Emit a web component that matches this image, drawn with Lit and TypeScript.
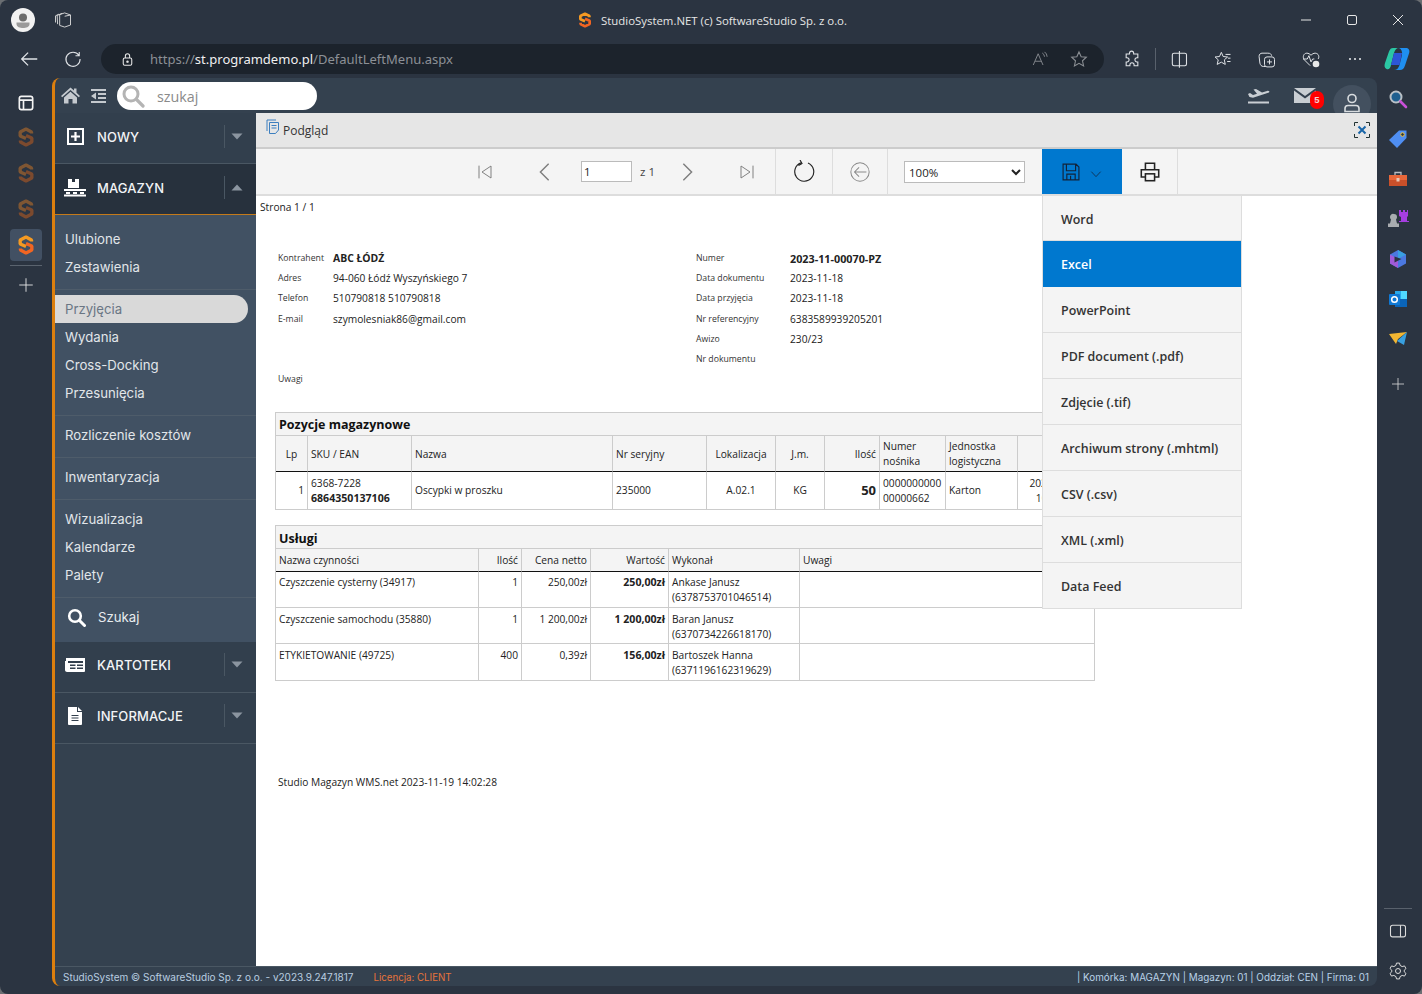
import { LitElement, css, html, svg } from 'lit'
import { customElement } from 'lit/decorators.js'

const icon = (size: number, body: unknown, box = 24) => html`
  <svg width=${size} height=${size} viewBox="0 0 ${box} ${box}" fill="none" stroke="currentColor" stroke-width="1.5">${body}</svg>
`

const sLogo = (size: number, top: string, bottom: string) => html`
  <svg width=${size} height=${size} viewBox="0 0 20 20" fill="none" stroke-width="3.4" stroke-linejoin="bevel">
    <path stroke=${top} d="M15.5 6.5 V5 L10 2 L4.2 5 V9 L10 11.5" />
    <path stroke=${bottom} d="M10 8.5 L15.8 11 V15 L10 18 L4.5 15 V13.5" />
  </svg>
`

const caret = (up: boolean) => html`
  <svg width="12" height="7" viewBox="0 0 12 7"><path fill="#8b95a0" d=${up ? 'M6 0.5 L11.5 6.5 H0.5 Z' : 'M6 6.5 L11.5 0.5 H0.5 Z'} /></svg>
`

const icons = {
  tabs: svg`<path d="M8 5.5 L14 3.5 L21 6 V18 L14 20.5 L8 18.5 Z M14 7.5 L21 6 M5.5 17 L5 6.5 L11 4 M3 15 V7 L7 5" stroke-width="1.1" />`,
  back: svg`<path d="M21 12 H4 M11 5 L4 12 L11 19" stroke-width="1.4" />`,
  refresh: svg`<path d="M19 7.5 A8.5 8.5 0 1 0 20.5 12 M19.5 3.5 V8 H15" stroke-width="1.3" />`,
  lock: svg`<rect x="6" y="10" width="12" height="10" rx="2" /><path d="M9 10 V7 a3 3 0 0 1 6 0 V10" /><circle cx="12" cy="15" r="1" fill="currentColor" />`,
  aloud: svg`<path d="M3 20 L9.5 5 L16 20 M5.5 15 H13.5 M15 4 a6 6 0 0 1 3 5 M18 2.5 a8 8 0 0 1 3.5 6.5" stroke-width="1.2" />`,
  star: svg`<path d="M12 3.5 L14.6 9.2 L20.8 9.9 L16.2 14.1 L17.5 20.3 L12 17.2 L6.5 20.3 L7.8 14.1 L3.2 9.9 L9.4 9.2 Z" stroke-width="1.3" />`,
  puzzle: svg`<path d="M9 5 a2.5 2.5 0 0 1 5 0 V6 H19 V10.5 H18 a2.5 2.5 0 0 0 0 5 H19 V20 H14.5 V19 a2.5 2.5 0 0 0 -5 0 V20 H5 V15.5 H6 a2.5 2.5 0 0 0 0 -5 H5 V6 H9 Z" stroke-width="1.3" />`,
  split: svg`<rect x="4" y="5" width="17" height="15" rx="2" stroke-width="1.3" /><path d="M12.5 2.5 V22.5" stroke-width="1.3" />`,
  favs: svg`<path d="M10 4 L12.2 9 L17.5 9.6 L13.6 13 L14.7 18.5 L10 15.8 L5 18.5 L6.3 13 L2.5 9.6 L7.8 9 Z M15 6.5 H21 M18 11 H21 M17 15 H21" stroke-width="1.2" />`,
  collections: svg`<path d="M10 21 H8 C5 21 4 19 3.5 17 L2.5 9 C2.5 6.5 4 5 6 5 H13 C16 5 17 6 17.5 8" stroke-width="1.2" /><rect x="9" y="9.5" width="12" height="12" rx="3" stroke-width="1.2" /><path d="M15 12.5 V18.5 M12 15.5 H18" stroke-width="1.2" />`,
  health: svg`<path d="M11 20 L4 13 C1.5 10 3 5 7 5 C9 5 10.5 6 12 7.5 C13.5 6 15 5 17 5 C21 5 22.5 9.5 20.5 12 M2.5 12 H7.5 L9.5 8 L12 15.5 L14 12 H16" stroke-width="1.2" /><circle cx="18" cy="18" r="4" fill="#e8e8e8" stroke="none" />`,
  more: svg`<circle cx="6" cy="12" r="1.3" fill="currentColor" stroke="none" /><circle cx="12" cy="12" r="1.3" fill="currentColor" stroke="none" /><circle cx="18" cy="12" r="1.3" fill="currentColor" stroke="none" />`,
  panel: svg`<rect x="4" y="4" width="16" height="16" rx="2.5" stroke-width="2" /><path d="M4 8.5 H20 M9 8.5 V20" stroke-width="2" />`,
  plus: svg`<path d="M12 3 V21 M3 12 H21" stroke-width="1.2" />`,
  sidePanel: svg`<rect x="3" y="5" width="18" height="14" rx="2.5" stroke-width="1.3" /><path d="M15 5 V19" stroke-width="1.3" />`,
  gear: svg`<circle cx="12" cy="12" r="3" stroke-width="1.2" /><path d="M10.2 2.5 H13.8 L14.5 5.3 L17 6.7 L19.8 5.9 L21.6 9 L19.5 11 V13 L21.6 15 L19.8 18.1 L17 17.3 L14.5 18.7 L13.8 21.5 H10.2 L9.5 18.7 L7 17.3 L4.2 18.1 L2.4 15 L4.5 13 V11 L2.4 9 L4.2 5.9 L7 6.7 L9.5 5.3 Z" stroke-width="1.2" stroke-linejoin="round" />`,
  first: svg`<path d="M4 3.5 V20.5 M20 4 L8 12 L20 20 Z" stroke-width="1.3" />`,
  last: svg`<path d="M20 3.5 V20.5 M4 4 L16 12 L4 20 Z" stroke-width="1.3" />`,
  prev: svg`<path d="M16 3 L7 12 L16 21" stroke-width="1.6" />`,
  next: svg`<path d="M8 3 L17 12 L8 21" stroke-width="1.6" />`,
  reload: svg`<path d="M9 2.800 A9.5 9.5 0 1 0 16 3 M8 0 L10 3.500 L6.500 5.500" stroke-width="1.15" />`,
  backCircle: svg`<circle cx="12" cy="12" r="10" stroke-width="1.1" /><path d="M19 12 H6 M11 7 L6 12 L11 17" stroke-width="1.1" />`,
  floppy: svg`<path d="M2.5 2.5 H18 L21.5 6 V21.5 H2.5 Z M6.5 2.5 V10.5 H17.5 V2.5 M7 21.5 V14.5 H17 V21.5 M11.5 16.5 V21.5" stroke-width="1.4" />`,
  chevron: svg`<path d="M4 8 L12 16.500 L20 8" stroke-width="1.3" />`,
  printer: svg`<path d="M7 9 V2.5 H17 V9 M6.5 17.5 H2.5 V9.5 H21.5 V17.5 H17.5" stroke-width="1.7" /><rect x="7" y="14" width="10" height="7.5" stroke-width="1.7" />`,
}

const rightRail = [
  html`<svg width="20" height="20" viewBox="0 0 20 20" fill="none"><circle cx="8" cy="8" r="5.5" fill="#1f5f8f" stroke="#b9c0c6" stroke-width="2" /><path d="M12.5 12.5 L18 18" stroke="#c850d8" stroke-width="2.6" stroke-linecap="round" /></svg>`,
  html`<svg width="20" height="20" viewBox="0 0 20 20"><path fill="#4f8ef2" d="M11 1.5 H18.5 V9 L9 19 L1 11 Z" /><circle cx="14.5" cy="5.5" r="1.8" fill="#2b3442" stroke="#f2c230" stroke-width="1" /></svg>`,
  html`<svg width="20" height="20" viewBox="0 0 20 20" fill="none"><path d="M7 6 V3.5 H13 V6" stroke="#b9bdc2" stroke-width="1.3" /><rect x="1" y="6" width="18" height="5" fill="#e8673a" /><rect x="1" y="11" width="18" height="6" fill="#c9502a" /><rect x="8.5" y="9" width="3" height="3.5" fill="#e6c7b5" /></svg>`,
  html`<svg width="22" height="20" viewBox="0 0 22 20"><path fill="#a9acb0" d="M7 5 a3 3 0 0 1 3 3 c0 1 -.5 2 -1 2.5 l1 4 h2 v3.5 H1 V14.500 h2 l1 -4 C3.500 10 3 9 3 8 a3 3 0 0 1 4 -3 Z" /><path fill="#a53ee0" d="M12 1 h2 v2 h2 V1 h2 v2 h2 V1 h1 v6 l-1 1 v4 h2 v1 H12 v-1 h2 V8 l-2 -1 Z" /></svg>`,
  html`<svg width="20" height="20" viewBox="0 0 20 20" fill="none"><path d="M10 1 L18 5.500 V14.500 L10 19 L2 14.500 V5.500 Z" fill="#4b78e0" /><path d="M2 5.500 L10 10 V19 L2 14.500 Z" fill="#a15ad8" /><path d="M10 1 L18 5.500 L10 10 Z" fill="#38a0e0" /><path d="M6.500 7.500 L13.500 10 L6.500 13.500 Z" fill="#2b3442" /></svg>`,
  html`<svg width="20" height="20" viewBox="0 0 20 20"><rect x="7" y="2" width="12" height="16" fill="#28a8ea" /><rect x="13" y="2" width="6" height="8" fill="#50d9ff" /><rect x="7" y="10" width="12" height="8" fill="#0a64b8" /><rect x="1" y="5" width="11" height="11" rx="1" fill="#0f78d4" /><circle cx="6.500" cy="10.500" r="2.800" fill="none" stroke="#fff" stroke-width="1.500" /></svg>`,
  html`<svg width="20" height="20" viewBox="0 0 20 20"><path fill="#f2b632" d="M1 5 L19 3 L10 10 L8 15 Z" /><path fill="#38a0e0" d="M19 3 L16 16 L9 12 Z" /></svg>`,
]

const menu: { text: string; active?: boolean }[][] = [
  [{ text: 'Ulubione' }, { text: 'Zestawienia' }],
  [{ text: 'Przyjęcia', active: true }, { text: 'Wydania' }, { text: 'Cross-Docking' }, { text: 'Przesunięcia' }],
  [{ text: 'Rozliczenie kosztów' }],
  [{ text: 'Inwentaryzacja' }],
  [{ text: 'Wizualizacja' }, { text: 'Kalendarze' }, { text: 'Palety' }],
]

const exportItems = ['Word', 'Excel', 'PowerPoint', 'PDF document (.pdf)', 'Zdjęcie (.tif)', 'Archiwum strony (.mhtml)', 'CSV (.csv)', 'XML (.xml)', 'Data Feed']

const infoLeft = [
  ['Kontrahent', 'ABC ŁÓDŹ'],
  ['Adres', '94-060 Łódź Wyszyńskiego 7'],
  ['Telefon', '510790818 510790818'],
  ['E-mail', 'szymolesniak86@gmail.com'],
  ['', ''],
  ['', ''],
  ['Uwagi', ''],
]

const infoRight = [
  ['Numer', '2023-11-00070-PZ'],
  ['Data dokumentu', '2023-11-18'],
  ['Data przyjęcia', '2023-11-18'],
  ['Nr referencyjny', '6383589939205201'],
  ['Awizo', '230/23'],
  ['Nr dokumentu', ''],
]

const services = [
  ['Czyszczenie cysterny (34917)', '1', '250,00zł', '250,00zł', 'Ankase Janusz', '(6378753701046514)'],
  ['Czyszczenie samochodu (35880)', '1', '1 200,00zł', '1 200,00zł', 'Baran Janusz', '(6370734226618170)'],
  ['ETYKIETOWANIE (49725)', '400', '0,39zł', '156,00zł', 'Bartoszek Hanna', '(6371196162319629)'],
]

@customElement('app-root')
export class AppRoot extends LitElement {
  static styles = css`
    :host {
      display: block;
      width: 1422px;
      height: 994px;
      overflow: hidden;
      background: #6a6e72;
      font-family: 'Noto Sans', sans-serif;
    }

    .window {
      width: 1422px;
      height: 994px;
      box-sizing: border-box;
      border-radius: 8px;
      background: #2b3441;
      display: flex;
      flex-direction: column;
      color: #e8e8e8;
      overflow: hidden;
    }

    .center { display: flex; align-items: center; justify-content: center; flex: none; }

    /* browser chrome */
    .titlebar { height: 40px; flex: none; display: flex; align-items: center; position: relative; }
    .avatar { width: 24px; height: 24px; margin-left: 11px; border-radius: 50%; background: #f2f2f2; overflow: hidden; }
    .tabs-btn { width: 24px; height: 24px; margin-left: 16px; color: #dcdcdc; }
    .title { flex: 1; display: flex; align-items: center; justify-content: center; gap: 8px; font-size: 11.4px; color: #e6e6e6; margin-right: -66px; }
    .title span { font-family: 'Open Sans', sans-serif; }
    .winbtns { display: flex; margin-right: 1px; }
    .winbtn { width: 46px; height: 40px; color: #e6e6e6; }

    .addrbar { height: 38px; flex: none; display: flex; align-items: center; padding-left: 7px; }
    .ib { width: 44px; height: 38px; color: #dfe2e6; }
    .url-pill { width: 1003px; height: 30px; margin: 0 6px; box-sizing: border-box; border-radius: 15px; background: #1c232c; display: flex; align-items: center; padding: 0 6px 0 17px; }
    .lock { width: 18px; color: #e8e8e8; margin-right: 14px; }
    .url { flex: 1; font-size: 13.03px; color: #8c9096; white-space: nowrap; }
    .url span { color: #f0f0f0; }
    .url-end { width: 39px; color: #8b8f94; }
    .vsep { width: 1px; height: 22px; background: #59616c; margin: 0 1px; flex: none; }
    .copilot { width: 40px; }

    .shell { flex: 1; display: flex; min-height: 0; }

    .lrail { width: 52px; flex: none; display: flex; flex-direction: column; align-items: center; padding-top: 8px; box-sizing: border-box; }
    .lrail .it { width: 32px; height: 36px; }
    .lrail .it.first { height: 33px; color: #f4f4f4; }
    .lrail .it.on { height: 32px; margin: 2px 0; border-radius: 4px; background: #425063; }
    .lrail .line { width: 32px; height: 1px; background: #5a636e; margin-top: 2px; }
    .lrail .it.add { color: #e8e8e8; margin-top: 1px; }

    .rrail { width: 45px; flex: none; display: flex; flex-direction: column; align-items: center; padding: 1px 3px 3px 0; box-sizing: border-box; }
    .rrail .it { width: 40px; height: 40px; flex: none; color: #dcdcdc; }
    .rrail .it.add { margin-top: 5px; }
    .rrail .line { width: 28px; height: 1px; background: #59616c; margin-top: auto; margin-bottom: 2px; }

    /* application */
    .app { flex: 1; min-width: 0; display: flex; flex-direction: column; margin-bottom: 8px; border-radius: 8px; border-left: 3px solid #dc7f0e; background: #34414f; overflow: hidden; font-family: 'Inter', sans-serif; }
    .topbar { height: 35px; flex: none; display: flex; align-items: center; position: relative; }
    .home { width: 20px; margin-left: 5px; color: #c4c9ce; }
    .outdent { width: 20px; margin-left: 8px; color: #c4c9ce; }
    .search { width: 200px; height: 28px; margin-left: 9px; border-radius: 14px; background: #fff; display: flex; align-items: center; box-sizing: border-box; padding-left: 4px; }
    .search .glass { color: #b4b4b4; width: 24px; }
    .search span { margin: 2px 0 0 12px; font-size: 14.3px; color: #8a8a8a; font-family: 'Open Sans', sans-serif; }
    .top-right { margin-left: auto; display: flex; align-items: center; }
    .plane { width: 28px; color: #c9ced3; margin-right: 20px; }
    .mail { position: relative; width: 24px; height: 20px; margin-right: 16px; color: #c9ced3; }
    .badge { position: absolute; right: -7px; top: 5px; width: 14px; height: 18px; border-radius: 7px; background: #f00; color: #f4d0d0; font-size: 9.500px; font-weight: 700; display: flex; align-items: center; justify-content: center; font-family: 'Liberation Sans', sans-serif; }
    .userbtn { width: 38px; height: 38px; border-radius: 50%; background: #43505f; margin: 8px 6px -8px 0; color: #d8dcdf; display: flex; align-items: flex-start; justify-content: center; padding-top: 8px; box-sizing: border-box; }

    .mid { flex: 1; display: flex; min-height: 0; position: relative; }
    .side { width: 201px; flex: none; display: flex; flex-direction: column; background: #34414f; }
    .hdr { height: 51px; flex: none; box-sizing: border-box; border-bottom: 1px solid #4a5763; border-top: 1px solid transparent; padding-bottom: 4px; display: flex; align-items: center; background: #323f4d; }
    .hdr.open { background: #27313d; border-bottom-color: #c47a1a; }
    .hdr.low { padding-bottom: 6px; }
    .hdr .ic { width: 24px; margin-left: 8px; color: #fff; }
    .hdr .lb { margin-left: 10px; font-size: 13px; font-weight: 500; color: #f2f4f6; flex: 1; letter-spacing: .1px; }
    .hdr .sp { width: 1px; height: 23px; background: #4a5763; }
    .hdr .cr { width: 24px; margin-right: 7px; }

    .sub { background: #415163; }
    .group { padding: 5px 0 8px; border-bottom: 1px solid #4e5c6a; }
    .group.top { padding: 10px 0 8px; }
    .item { height: 28px; display: flex; align-items: center; padding-left: 10px; font-size: 13.2px; color: #e1e6ea; box-sizing: border-box; }
    .item.on { background: #d9d9d9; color: #6a7684; margin-right: 8px; border-radius: 0 14px 14px 0; }
    .seek { height: 44px; flex: none; display: flex; align-items: center; padding-bottom: 6px; box-sizing: border-box; background: #415163; color: #fff; }
    .seek .ic { width: 24px; margin-left: 9px; }
    .seek .lb { font-size: 13.2px; margin-left: 10px; color: #e8ecef; }

    .main { flex: 1; min-width: 0; background: #fff; display: flex; flex-direction: column; position: relative; font-family: 'Open Sans', sans-serif; color: #222; }
    .panelhead { height: 36px; flex: none; box-sizing: border-box; background: #e6e6e6; border-bottom: 2px solid #ccc; display: flex; align-items: center; padding: 1px 0 0 9px; font-size: 12px; color: #333; }
    .panelhead .doc { width: 16px; margin: -7px 2px 0 0; color: #3d7fbf; }
    .panelhead .closer { margin: -1px 6px 0 auto; width: 18px; color: #1a66a8; }

    .toolbar { height: 47px; flex: none; box-sizing: border-box; background: #f4f4f4; border-bottom: 2px solid #ddd; display: flex; align-items: stretch; }
    .cell { border-right: 1px solid #ddd; display: flex; align-items: center; box-sizing: border-box; flex: none; }
    .nav { width: 520px; padding-left: 199px; color: #7e7e7e; }
    .navbtn { width: 60px; height: 100%; }
    .nav .pg { width: 51px; height: 21px; margin-left: 6px; box-sizing: border-box; border: 1px solid #bbb; background: #fff; padding: 0 2px; font: 11.500px 'Open Sans', sans-serif; color: #222; }
    .nav .of { margin: 0 2px 0 8px; width: 16px; font-size: 11.500px; color: #444; white-space: nowrap; }
    .reload { width: 57px; color: #222; justify-content: center; }
    .backb { width: 55px; color: #8a8a8a; justify-content: center; }
    .zoomc { width: 154px; justify-content: flex-start; padding: 1px 0 0 16px; border-right: 0; }
    .zoomc select { width: 121px; height: 22px; border: 1px solid #bbb; background: #fff; font: 11.500px 'Open Sans', sans-serif; color: #222; border-radius: 0; }
    .savec { width: 80px; background: #0078cf; color: #12233a; justify-content: center; gap: 8px; border-right: 0; }
    .savec svg:last-child { margin-top: 4px; }
    .printc { width: 56px; color: #222; justify-content: center; }

    .report { flex: 1; min-height: 0; overflow: hidden; padding: 4px 0 0 4px; font-size: 10.200px; line-height: 15px; }
    .page-no { font-size: 10.200px; height: 14px; line-height: 14px; }
    .info { display: flex; margin: 34px 0 0 18px; }
    .col { display: grid; grid-auto-rows: 20.300px; align-items: center; }
    .col.lc { width: 418px; grid-template-columns: 55px 1fr; }
    .col.rc { grid-template-columns: 94px 1fr; }
    .key { font-size: 8.700px; color: #333; }
    .val { font-size: 10.200px; color: #222; }
    .val.strong { font-weight: 700; font-size: 10.400px; }
    .col.rc .val.strong { font-size: 10.800px; }

    .tbl { width: 820px; margin: 22px 0 0 15px; box-sizing: border-box; border: 1px solid #ccc; }
    .tbl.second { margin-top: 15px; }
    .tbl-title { height: 23px; box-sizing: border-box; background: #f4f4f4; border-bottom: 1px solid #ccc; font-weight: 700; font-size: 12.500px; line-height: 24px; padding-left: 3px; color: #111; }
    .tbl.second .tbl-title { line-height: 25px; }
    .row { display: grid; }
    .tbl.a .row { grid-template-columns: 32px 104px 201px 94px 69px 49px 55px 66px 72px 1fr; }
    .tbl.b .row { grid-template-columns: 203px 43px 69px 78px 131px 1fr; }
    .row > div { border-right: 1px solid #ccc; border-bottom: 1px solid #ccc; padding: 0 3px; box-sizing: border-box; display: flex; flex-direction: column; justify-content: center; min-width: 0; white-space: nowrap; }
    .row > div:last-child { border-right: 0; }
    .row:last-child > div { border-bottom: 0; }
    .row.head > div { background: #f4f4f4; border-bottom: 1px solid #111; }
    .tbl.a .row.head { height: 36px; }
    .tbl.a .row.head > div { padding-top: 1px; }
    .tbl.a .row.body { height: 37px; }
    .tbl.b .row.head { height: 23px; }
    .tbl.b .row.body { height: 36px; }
    .tbl.b .row.body > div { justify-content: flex-start; padding-top: 3px; }
    .tbl.b .row.body + .row.body > div { padding-top: 4px; }
    .ar { text-align: right; }
    .ac { text-align: center; }
    b { font-weight: 700; font-size: 10.600px; }
    .qty { font-size: 13px; font-weight: 700; }
    .foot { margin: 94px 0 0 18px; font-size: 10.200px; }

    .export { position: absolute; left: 786px; top: 83px; width: 200px; background: #f4f4f4; border: 1px solid #ddd; border-top: 0; box-sizing: border-box; font-family: 'Open Sans', sans-serif; }
    .export div { height: 46px; box-sizing: border-box; border-bottom: 1px solid #ddd; display: flex; align-items: center; padding: 1px 0 0 18px; font-size: 12.450px; font-weight: 600; color: #333; }
    .export div:first-child { height: 45px; padding-top: 2px; }
    .export div.on { background: #0078cf; color: #fff; border-bottom-color: #0078cf; }
    .export div:last-child { border-bottom: 0; height: 45px; padding-top: 1px; }

    .status { height: 20px; flex: none; box-sizing: border-box; border-top: 1px solid #4a5763; display: flex; align-items: center; padding: 1px 8px 0; font-size: 10px; color: #b9cde0; white-space: nowrap; }
    .status .lic { margin-left: 20px; color: #e8743b; font-size: 9.700px; }
    .status .right { margin-left: auto; color: #b9d2e8; font-size: 9.900px; }
  `

  render() {
    return html`
      <div class="window">
        <div class="titlebar">
          <div class="avatar center">
            <svg width="24" height="24" viewBox="0 0 24 24"><circle cx="12" cy="9.500" r="4" fill="#6d6d6d" /><path fill="#9a9a9a" d="M5.500 14.500 H18.500 V16 C18.500 19 15 20 12 20 C9 20 5.500 19 5.500 16 Z" /></svg>
          </div>
          <div class="tabs-btn center">${icon(20, icons.tabs)}</div>
          <div class="title">${sLogo(16, '#f59a23', '#f26522')}<span>StudioSystem.NET (c) SoftwareStudio Sp. z o.o.</span></div>
          <div class="winbtns">
            <div class="winbtn center"><svg width="12" height="12" viewBox="0 0 12 12"><path d="M1 6 H11" stroke="currentColor" /></svg></div>
            <div class="winbtn center"><svg width="12" height="12" viewBox="0 0 12 12" fill="none"><rect x="1.500" y="1.500" width="9" height="9" rx="1.500" stroke="currentColor" /></svg></div>
            <div class="winbtn center"><svg width="12" height="12" viewBox="0 0 12 12"><path d="M1 1 L11 11 M11 1 L1 11" stroke="currentColor" /></svg></div>
          </div>
        </div>

        <div class="addrbar">
          <div class="ib center">${icon(22, icons.back)}</div>
          <div class="ib center">${icon(20, icons.refresh)}</div>
          <div class="url-pill">
            <div class="lock center">${icon(17, icons.lock)}</div>
            <div class="url">https://<span>st.programdemo.pl</span>/DefaultLeftMenu.aspx</div>
            <div class="url-end center">${icon(18, icons.aloud)}</div>
            <div class="url-end center">${icon(20, icons.star)}</div>
          </div>
          <div class="ib center">${icon(20, icons.puzzle)}</div>
          <div class="vsep"></div>
          <div class="ib center">${icon(20, icons.split)}</div>
          <div class="ib center">${icon(20, icons.favs)}</div>
          <div class="ib center">${icon(20, icons.collections)}</div>
          <div class="ib center">${icon(20, icons.health)}</div>
          <div class="ib center">${icon(20, icons.more)}</div>
          <div class="copilot center">
            <svg width="26" height="24" viewBox="0 0 26 24"><path fill="#2bc7a4" d="M9 1 H15 C12 1 11 3 10 6 L7 18 C6.500 21 5 23 2.500 22 C0.500 21 0 19 1 16 L5 4.500 C6 2 7 1 9 1 Z" /><path fill="#1f8ff0" d="M15 1 H22 C25 1 26 3.500 25 6.500 L21 18.500 C20 21.500 18.500 23 16 23 H10 C13 23 14.500 21 15.500 18 L18 8 C18.500 5 17.500 2 15 1 Z" /><path fill="#2c56d8" d="M10 6 H18 L15.500 18 H7 Z" /></svg>
          </div>
        </div>

        <div class="shell">
          <div class="lrail">
            <div class="it first center">${icon(20, icons.panel)}</div>
            ${[0, 1, 2].map(() => html`<div class="it center">${sLogo(20, '#7f5633', '#7c4a2e')}</div>`)}
            <div class="it on center">${sLogo(20, '#f59a23', '#f26522')}</div>
            <div class="line"></div>
            <div class="it add center">${icon(18, icons.plus)}</div>
          </div>

          <div class="app">
            <div class="topbar">
              <div class="home center">
                <svg width="19" height="17" viewBox="0 0 19 17"><path fill="currentColor" d="M9.500 0.500 L13 3.500 V1.500 H15.500 V5.800 L19 9 L17.800 10.200 L9.500 3 L1.200 10.200 L0 9 Z M3 10.500 L9.500 4.800 L16 10.500 V16.500 H11.500 V12 H7.500 V16.500 H3 Z" /></svg>
              </div>
              <div class="outdent center">
                <svg width="15" height="14" viewBox="0 0 15 14"><path fill="currentColor" d="M0 0 H15 V2 H0 Z M7 4 H15 V6 H7 Z M7 8 H15 V10 H7 Z M0 12 H15 V14 H0 Z M5 3.500 V10.500 L0 7 Z" /></svg>
              </div>
              <div class="search">
                <div class="glass center"><svg width="24" height="24" viewBox="0 0 24 24" fill="none"><circle cx="10" cy="10" r="7" stroke="currentColor" stroke-width="3" /><path d="M15.500 15.500 L22 22" stroke="currentColor" stroke-width="3.200" stroke-linecap="round" /></svg></div>
                <span>szukaj</span>
              </div>
              <div class="top-right">
                <div class="plane center">
                  <svg width="22" height="16" viewBox="0 0 22 16"><path fill="currentColor" d="M0 6 L2 5 L5 7 L9 5.800 L5.500 1.500 L8 1 L14 4.500 L19 3 C21 2.500 22 3.500 21 4.500 L5 9.800 L1.500 9 Z M0 13.500 H21 V15.500 H0 Z" /></svg>
                </div>
                <div class="mail center">
                  <svg width="22" height="15" viewBox="0 0 22 15"><path fill="currentColor" d="M0 0 H22 L11 8 Z M0 2.500 L11 10.500 L22 2.500 V15 H0 Z" /></svg>
                  <div class="badge">5</div>
                </div>
                <div class="userbtn">
                  <svg width="18" height="20" viewBox="0 0 18 20" fill="none" stroke="currentColor" stroke-width="1.600"><circle cx="9" cy="5.500" r="4" /><path d="M2 18.500 V15.500 C2 13.500 3.500 12.500 5 12.500 H13 C14.500 12.500 16 13.500 16 15.500 V18.500 Z" /></svg>
                </div>
              </div>
            </div>

            <div class="mid">
              <div class="side">
                <div class="hdr">
                  <div class="ic center"><svg width="17" height="17" viewBox="0 0 17 17" fill="none"><rect x="1" y="1" width="15" height="15" stroke="currentColor" stroke-width="2" /><path d="M8.500 4 V13 M4 8.500 H13" stroke="currentColor" stroke-width="2.200" /></svg></div>
                  <div class="lb">NOWY</div><div class="sp"></div><div class="cr center">${caret(false)}</div>
                </div>
                <div class="hdr open">
                  <div class="ic center"><svg width="22" height="18" viewBox="0 0 22 18"><path fill="currentColor" d="M4 0 H8 V3 H11 V0 H15 V9 H4 Z M0 10 H22 V12 H0 Z M2 13 H6 V15 H2 Z M9 13 H13 V15 H9 Z M16 13 H20 V15 H16 Z M0 15.500 H22 V17.500 H0 Z" /></svg></div>
                  <div class="lb">MAGAZYN</div><div class="sp"></div><div class="cr center">${caret(true)}</div>
                </div>
                <div class="sub">
                  ${menu.map((group, i) => html`
                    <div class="group ${i === 0 ? 'top' : ''}">
                      ${group.map(m => html`<div class="item ${m.active ? 'on' : ''}">${m.text}</div>`)}
                    </div>
                  `)}
                </div>
                <div class="seek">
                  <div class="ic center"><svg width="19" height="19" viewBox="0 0 19 19" fill="none"><circle cx="8" cy="8" r="5.800" stroke="currentColor" stroke-width="2.600" /><path d="M12.500 12.500 L17.500 17.500" stroke="currentColor" stroke-width="3" stroke-linecap="round" /></svg></div>
                  <div class="lb">Szukaj</div>
                </div>
                <div class="hdr low">
                  <div class="ic center"><svg width="20" height="14" viewBox="0 0 20 14"><path fill="currentColor" d="M1 0 H20 V13 C20 13.500 19.500 14 19 14 H2 C1 14 0 13 0 12 V3 H1 Z M3 3 V5 H18 V3 Z M5 6.500 V8 H10.500 V6.500 Z M12 6.500 V8 H18 V6.500 Z M5 9.500 V11 H10.500 V9.500 Z M12 9.500 V11 H18 V9.500 Z" fill-rule="evenodd" /></svg></div>
                  <div class="lb">KARTOTEKI</div><div class="sp"></div><div class="cr center">${caret(false)}</div>
                </div>
                <div class="hdr low">
                  <div class="ic center"><svg width="14" height="18" viewBox="0 0 14 18"><path fill="currentColor" fill-rule="evenodd" d="M0 0 H9 V5 H14 V17 C14 17.500 13.500 18 13 18 H1 C.500 18 0 17.500 0 17 Z M10 0 L14 4 H10 Z M3.500 8 V9 H10.500 V8 Z M3.500 10.500 V11.500 H10.500 V10.500 Z M3.500 13 V14 H10.500 V13 Z" /></svg></div>
                  <div class="lb">INFORMACJE</div><div class="sp"></div><div class="cr center">${caret(false)}</div>
                </div>
              </div>

              <div class="main">
                <div class="panelhead">
                  <div class="doc center"><svg width="14" height="16" viewBox="0 0 14 16" fill="none" stroke="currentColor"><path d="M1 12 V1 H10 M3.500 14.500 V3.500 H12.500 V11 L9.500 14.500 Z" /><path d="M5.500 6.500 H10.500 M5.500 9 H10.500" /></svg></div>
                  Podgląd
                  <div class="closer center"><svg width="16" height="16" viewBox="0 0 16 16" fill="none" stroke="currentColor"><path d="M0.500 4 V0.500 H4 M12 0.500 H15.500 V4 M15.500 12 V15.500 H12 M4 15.500 H0.500 V12" stroke="#233" /><path d="M4.500 4.500 L11.500 11.500 M11.500 4.500 L4.500 11.500" stroke-width="2" /></svg></div>
                </div>

                <div class="toolbar">
                  <div class="cell nav">
                    <div class="navbtn center">${icon(18, icons.first)}</div>
                    <div class="navbtn center">${icon(22, icons.prev)}</div>
                    <input class="pg" value="1" />
                    <div class="of">z 1</div>
                    <div class="navbtn center">${icon(22, icons.next)}</div>
                    <div class="navbtn center">${icon(18, icons.last)}</div>
                  </div>
                  <div class="cell reload">${icon(24, icons.reload)}</div>
                  <div class="cell backb">${icon(22, icons.backCircle)}</div>
                  <div class="cell zoomc"><select><option>100%</option></select></div>
                  <div class="cell savec">${icon(20, icons.floppy)}${icon(14, icons.chevron)}</div>
                  <div class="cell printc">${icon(22, icons.printer)}</div>
                </div>

                <div class="report">
                  <div class="page-no">Strona 1 / 1</div>
                  <div class="info">
                    <div class="col lc">
                      ${infoLeft.map(([k, v], i) => html`<div class="key">${k}</div><div class="val ${i === 0 ? 'strong' : ''}">${v}</div>`)}
                    </div>
                    <div class="col rc">
                      ${infoRight.map(([k, v], i) => html`<div class="key">${k}</div><div class="val ${i === 0 ? 'strong' : ''}">${v}</div>`)}
                    </div>
                  </div>

                  <div class="tbl a">
                    <div class="tbl-title">Pozycje magazynowe</div>
                    <div class="row head">
                      <div class="ac">Lp</div><div>SKU / EAN</div><div>Nazwa</div><div>Nr seryjny</div>
                      <div class="ac">Lokalizacja</div><div class="ac">J.m.</div><div class="ar">Ilość</div>
                      <div>Numer<br />nośnika</div><div>Jednostka<br />logistyczna</div><div></div>
                    </div>
                    <div class="row body">
                      <div class="ar">1</div><div>6368-7228<br /><b>6864350137106</b></div><div>Oscypki w proszku</div><div>235000</div>
                      <div class="ac">A.02.1</div><div class="ac">KG</div><div class="ar qty">50</div>
                      <div>0000000000<br />00000662</div><div>Karton</div><div class="ac">2023-12-31<br />10:30:00</div>
                    </div>
                  </div>

                  <div class="tbl b second">
                    <div class="tbl-title">Usługi</div>
                    <div class="row head">
                      <div>Nazwa czynności</div><div class="ar">Ilość</div><div class="ar">Cena netto</div><div class="ar">Wartość</div><div>Wykonał</div><div>Uwagi</div>
                    </div>
                    ${services.map(s => html`
                      <div class="row body">
                        <div>${s[0]}</div><div class="ar">${s[1]}</div><div class="ar">${s[2]}</div><div class="ar"><b>${s[3]}</b></div><div>${s[4]}<br />${s[5]}</div><div></div>
                      </div>
                    `)}
                  </div>

                  <div class="foot">Studio Magazyn WMS.net 2023-11-19 14:02:28</div>
                </div>

                <div class="export">
                  ${exportItems.map(t => html`<div class=${t === 'Excel' ? 'on' : ''}>${t}</div>`)}
                </div>
              </div>
            </div>

            <div class="status">
              <span>StudioSystem © SoftwareStudio Sp. z o.o. - v2023.9.247.1817</span>
              <span class="lic">Licencja: CLIENT</span>
              <span class="right">| Komórka: MAGAZYN | Magazyn: 01 | Oddział: CEN | Firma: 01</span>
            </div>
          </div>

          <div class="rrail">
            ${rightRail.map(r => html`<div class="it center">${r}</div>`)}
            <div class="it add center">${icon(16, icons.plus)}</div>
            <div class="line"></div>
            <div class="it center">${icon(20, icons.sidePanel)}</div>
            <div class="it center">${icon(20, icons.gear)}</div>
          </div>
        </div>
      </div>
    `
  }
}
